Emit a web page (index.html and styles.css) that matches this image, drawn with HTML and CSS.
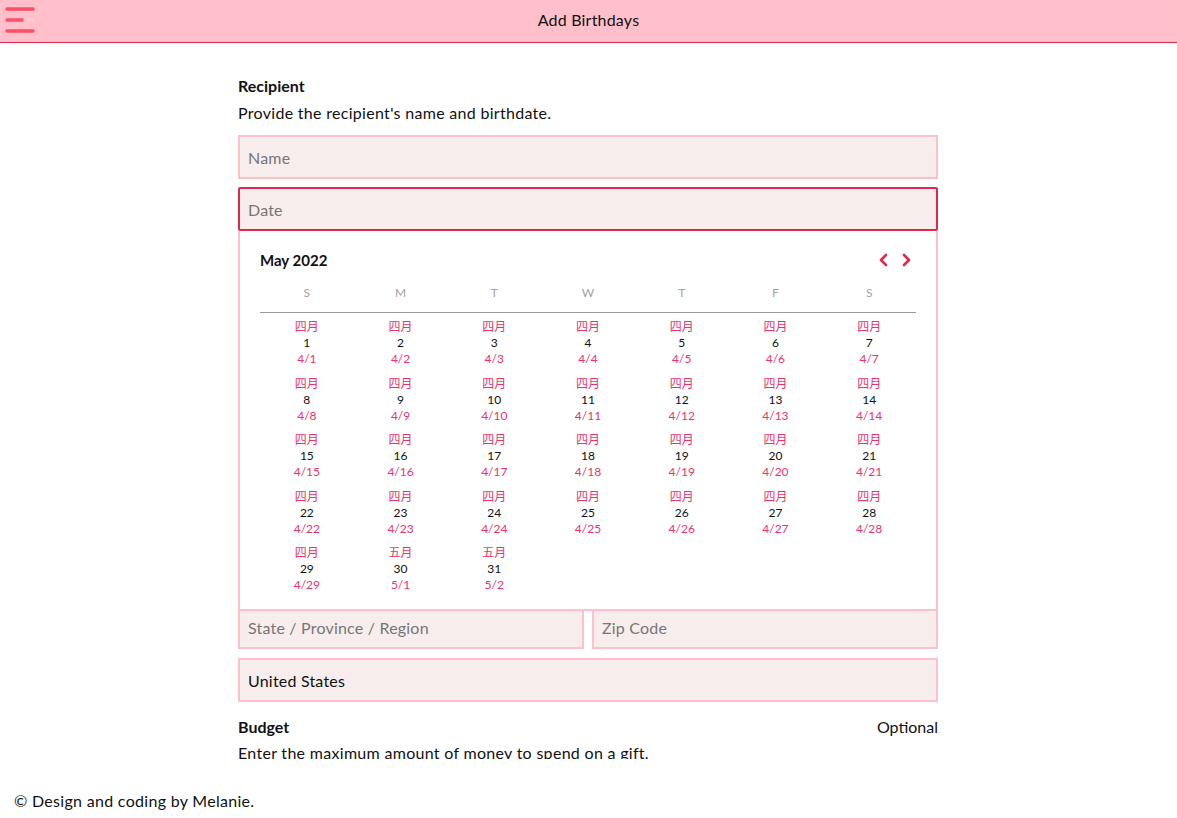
FILE: index.html
```html
<!DOCTYPE html>
<html lang="en">
<head>
<meta charset="utf-8">
<title>Add Birthdays</title>
<link rel="stylesheet" href="styles.css">
</head>
<body>
<div class="app">
  <header class="topbar">
    <button class="menu-btn" aria-label="Menu">
      <svg width="30" height="28" viewBox="0 0 30 28">
        <line x1="2" y1="2" x2="28" y2="2" class="bar"/>
        <line x1="2" y1="13" x2="18" y2="13" class="bar"/>
        <line x1="20" y1="13" x2="28" y2="13" class="bar-faint"/>
        <line x1="2" y1="24" x2="28" y2="24" class="bar"/>
      </svg>
    </button>
    <h1 class="title">Add Birthdays</h1>
  </header>

  <main class="main">
    <form class="form">
      <h2 class="section-title">Recipient</h2>
      <p class="section-desc">Provide the recipient's name and birthdate.</p>
      <input class="field" type="text" placeholder="Name">
      <div class="date-wrap">
        <input class="field field-focus" type="text" placeholder="Date">
        <div class="calendar">
          <div class="cal-head">
            <span class="cal-month">May 2022</span>
            <span class="cal-nav">
              <svg width="12" height="14" viewBox="0 0 12 14"><polyline points="8,2 3,7 8,12" class="chev"/></svg>
              <svg width="12" height="14" viewBox="0 0 12 14"><polyline points="4,2 9,7 4,12" class="chev"/></svg>
            </span>
          </div>
          <div class="cal-weekdays">
            <span>S</span><span>M</span><span>T</span><span>W</span><span>T</span><span>F</span><span>S</span>
          </div>
          <div class="cal-grid" id="grid"></div>
        </div>
      </div>
      <input class="field" type="text" placeholder="Street Address">
      <input class="field" type="text" placeholder="Apartment, suite, etc.">
      <input class="field" type="text" placeholder="City">
      <input class="field" type="text" placeholder="">
      <input class="field" type="text" placeholder="">
      <input class="field" type="text" placeholder="">
      <input class="field" type="text" placeholder="">
      <div class="row">
        <input class="field" type="text" placeholder="State / Province / Region">
        <input class="field" type="text" placeholder="Zip Code">
      </div>
      <input class="field field-country" type="text" value="United States">
      <div class="section-row">
        <h2 class="section-title">Budget</h2>
        <span class="optional">Optional</span>
      </div>
      <p class="section-desc">Enter the maximum amount of money to spend on a gift.</p>
      <input class="field" type="text" placeholder="Amount">
    </form>
  </main>

  <footer class="footer">© Design and coding by Melanie.</footer>
</div>

<script>
  var grid = document.getElementById('grid');
  var html = '';
  for (var d = 1; d <= 31; d++) {
    var lm, ld;
    if (d <= 29) { lm = '四月'; ld = '4/' + d; }
    else { lm = '五月'; ld = '5/' + (d - 29); }
    html += '<div class="day"><span class="lunar">' + lm + '</span><span class="num">' + d + '</span><span class="lunar">' + ld + '</span></div>';
  }
  grid.innerHTML = html;
</script>
</body>
</html>
```

FILE: styles.css
```css
* { box-sizing: border-box; }

html, body {
  margin: 0;
  padding: 0;
}

body {
  font-family: "Lato", "Noto Sans CJK SC", sans-serif;
  color: #111;
  background: #fff;
}

.app {
  height: 818px;
  display: flex;
  flex-direction: column;
  overflow: hidden;
}

.topbar {
  height: 43px;
  flex: none;
  background: #ffc0cb;
  border-bottom: 1px solid #e0294a;
  display: flex;
  align-items: center;
  justify-content: center;
  padding-bottom: 3px;
  position: relative;
}

.menu-btn {
  position: absolute;
  left: 5px;
  top: 7px;
  padding: 0;
  border: 0;
  background: transparent;
  line-height: 0;
}

.bar {
  stroke: #ff4f64;
  stroke-width: 3.5;
  stroke-linecap: round;
}

.bar-faint {
  stroke: #ffcbd0;
  stroke-width: 3.5;
  stroke-linecap: round;
}

.title {
  margin: 0;
  font-size: 16px;
  font-weight: 400;
  color: #111;
  letter-spacing: 0.2px;
}

.main {
  flex: 1;
  overflow: hidden;
  padding-top: 33px;
  padding-right: 1px;
}

.form {
  width: 700px;
  margin: 0 auto;
  display: flex;
  flex-direction: column;
}

.section-title {
  margin: 0;
  font-size: 16px;
  line-height: 20px;
  font-weight: 700;
  color: #111;
}

.section-desc {
  margin: 7px 0 0;
  font-size: 16px;
  line-height: 20px;
  color: #111;
  letter-spacing: 0.3px;
}

.section-desc + .field {
  margin-top: 12px;
}

.section-row {
  display: flex;
  justify-content: space-between;
  align-items: center;
  margin-top: 15px;
}

.section-row + .section-desc {
  margin-top: 6px;
}

.optional {
  font-size: 16px;
  line-height: 20px;
}

.field {
  display: block;
  width: 100%;
  height: 44px;
  margin: 0 0 8px;
  padding: 0 8px;
  border: 2px solid #ffc0cb;
  background: #f8eded;
  font-family: inherit;
  font-size: 16px;
  color: #111;
  outline: none;
  letter-spacing: 0.2px;
}

.field::placeholder {
  color: #767676;
}

.field-focus {
  border-color: #e0294a;
  border-radius: 2px;
}

.date-wrap {
  position: relative;
  margin-bottom: 8px;
}

.date-wrap .field {
  margin-bottom: 0;
}

.calendar {
  position: absolute;
  top: 100%;
  left: 0;
  right: 0;
  height: 380px;
  background: #fff;
  border: 2px solid #ffc0cb;
  border-top: 0;
  padding: 18px 20px 0;
  z-index: 5;
}

.cal-head {
  display: flex;
  justify-content: space-between;
  align-items: center;
  height: 22px;
}

.cal-month {
  font-size: 15px;
  font-weight: 700;
  color: #111;
}

.cal-nav {
  display: flex;
  gap: 10px;
  padding-right: 4px;
}

.chev {
  fill: none;
  stroke: #e0294a;
  stroke-width: 2.6;
  stroke-linecap: round;
  stroke-linejoin: round;
}

.cal-weekdays {
  display: grid;
  grid-template-columns: repeat(7, 1fr);
  margin-top: 14px;
  padding-bottom: 11px;
  border-bottom: 1px solid #9a9a9a;
  font-size: 12px;
  line-height: 16px;
  color: #a3a3a3;
  text-align: center;
  font-weight: 400;
}

.cal-grid {
  display: grid;
  grid-template-columns: repeat(7, 1fr);
  grid-auto-rows: 56.5px;
  padding-top: 6px;
}

.day {
  display: flex;
  flex-direction: column;
  align-items: center;
  font-size: 12px;
  line-height: 16px;
}

.lunar {
  color: #e8336d;
}

.num {
  color: #111;
}

.row {
  display: grid;
  grid-template-columns: 1fr 1fr;
  gap: 8px;
  margin-top: 2px;
}

.row .field {
  margin-bottom: 0;
}

.field-country {
  margin-top: 9px;
  margin-bottom: 0;
}

.footer {
  height: 59px;
  flex: none;
  padding: 32px 0 0 14px;
  font-size: 16px;
  line-height: 19px;
  letter-spacing: 0.3px;
  color: #111;
}
```
